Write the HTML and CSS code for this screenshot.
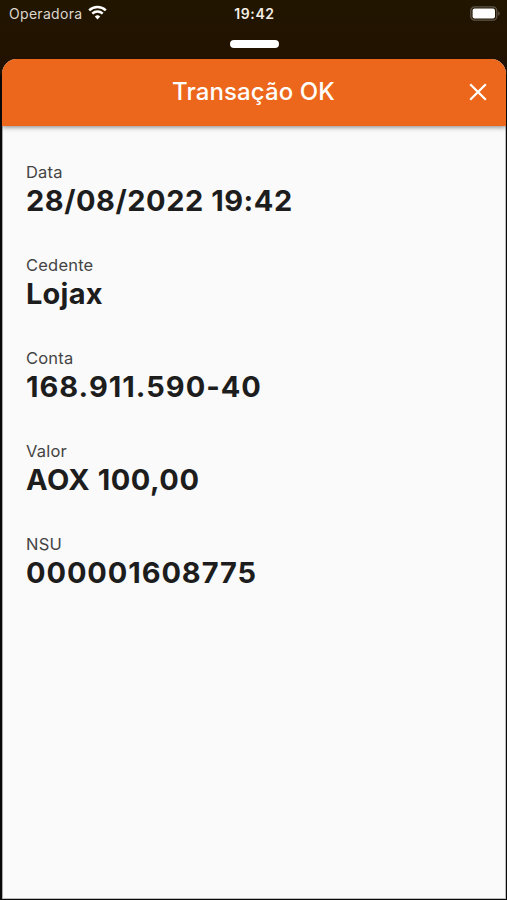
FILE: index.html
```html
<!DOCTYPE html>
<html lang="pt">
<head>
<meta charset="utf-8">
<title>Transação OK</title>
<link rel="stylesheet" href="styles.css">
</head>
<body>
<div class="screen">
  <div class="status">
    <div class="carrier"><span>Operadora</span>
      <svg class="wifi" viewBox="0 0 19 15" width="19" height="15"><g fill="none" stroke="#fff" stroke-width="2.5"><path d="M1.2 5.4a12 12 0 0 1 16.6 0"/><path d="M4.3 8.7a7.5 7.5 0 0 1 10.4 0"/></g><path d="M9.5 14.4 6.8 11.6a4 4 0 0 1 5.4 0z" fill="#fff"/></svg>
    </div>
    <div class="time">19:42</div>
    <svg class="battery" viewBox="0 0 31 15" width="31" height="15"><rect x=".8" y=".8" width="26" height="13.4" rx="4" fill="none" stroke="#5f574a" stroke-width="1.3"/><rect x="2.6" y="2.6" width="22.4" height="9.8" rx="2" fill="#fff"/><path d="M28.2 5q3 2.5 0 5z" fill="#5f574a"/></svg>
  </div>
  <div class="grabber"></div>
  <main class="sheet">
    <header class="bar">
      <h1>Transação OK</h1>
      <svg class="close" viewBox="0 0 18 18" width="18" height="18"><path d="M1.2 1.2l15.6 15.6M16.8 1.2L1.2 16.8" stroke="#fff" stroke-width="2.3"/></svg>
    </header>
    <dl class="fields">
      <div><dt>Data</dt><dd class="date">28/08/2022 19:42</dd></div>
      <div><dt>Cedente</dt><dd class="payee">Lojax</dd></div>
      <div><dt>Conta</dt><dd class="account">168.911.590-40</dd></div>
      <div><dt>Valor</dt><dd class="amount">AOX 100,00</dd></div>
      <div><dt>NSU</dt><dd class="nsu">000001608775</dd></div>
    </dl>
  </main>
</div>
</body>
</html>
```
FILE: styles.css
```css
* { box-sizing: border-box; margin: 0; }
body { font-family: Inter, "Liberation Sans", sans-serif; background: #000; }
.screen { height: 900px; display: flex; flex-direction: column; padding: 0 1px 1px 2px; overflow: hidden; background: linear-gradient(#211600, #221000 74px, #080808 75px); }
.status { height: 27px; display: grid; grid-template-columns: 1fr auto 1fr; align-items: center; padding: 0 5px 0 6px; color: #f5eee6; font-size: 14px; }
.carrier { display: flex; align-items: center; gap: 5.5px; padding-left: 1px; color: #ddd7cf; letter-spacing: .3px; }
.wifi { margin-top: -2px; }
.time { font-weight: 600; letter-spacing: .6px; }
.battery { justify-self: end; }
.grabber { width: 49px; height: 8px; flex: none; margin: 13px auto 10.5px; border-radius: 4px; background: #fff; }
.sheet { flex: 1; display: flex; flex-direction: column; background: #fafafa; border-radius: 15px 15px 0 0; overflow: hidden; box-shadow: inset 1px 0 #aaa, inset -1px -1px #bbb; }
.bar { height: 67px; flex: none; display: grid; grid-template-columns: 1fr auto 1fr; align-items: center; padding: 0 19px 0 18px; background: #ec671b; color: #fff; box-shadow: 0 1px 5px rgba(0,0,0,.5); }
.bar h1 { grid-column: 2; font-size: 24px; font-weight: 500; line-height: 30px; letter-spacing: .1px; }
.close { justify-self: end; }
.fields { display: flex; flex-direction: column; gap: 35.9px; padding: 36.5px 24px; color: #1d1d1d; }
.fields dt { font-size: 16.5px; line-height: 20px; letter-spacing: .2px; color: #444; }
.fields dd { font-size: 29px; line-height: 37px; font-weight: 700; letter-spacing: .53px; }
.fields .payee { letter-spacing: .2px; }
.fields .account { letter-spacing: 1px; }
.fields .nsu { letter-spacing: .9px; }
```
